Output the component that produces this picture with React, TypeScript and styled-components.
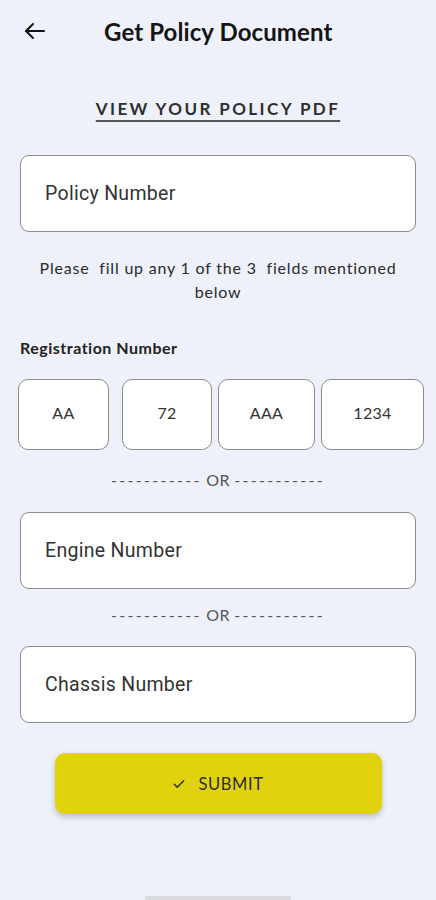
import React from "react";
import styled, { createGlobalStyle } from "styled-components";

const Global = createGlobalStyle`
  html, body { margin: 0; padding: 0; background: #eef1f9; }
  * { box-sizing: border-box; }
`;

const Screen = styled.div`
  min-height: 100vh;
  display: flex;
  flex-direction: column;
  background: #eef1f9;
  font-family: Lato, "Noto Sans", sans-serif;
  color: #1c1c1c;
`;

const Header = styled.header`
  height: 62px;
  display: flex;
  align-items: center;
  padding: 0 0 0 22px;
`;

const BackButton = styled.button`
  width: 26px;
  height: 26px;
  padding: 0;
  border: none;
  background: none;
  display: flex;
  align-items: center;
  justify-content: center;
  color: #111;
`;

const Title = styled.h1`
  margin: 0 0 0 56px;
  font-size: 24px;
  font-weight: 700;
  color: #151515;
  letter-spacing: 0.1px;
`;

const Content = styled.main`
  display: flex;
  flex-direction: column;
  padding: 0 20px;
`;

const LinkTitle = styled.a`
  align-self: center;
  margin-top: 36px;
  font-size: 17px;
  font-weight: 700;
  letter-spacing: 2.4px;
  color: #2e2e2e;
  text-decoration: underline;
  text-decoration-color: #555;
  text-underline-offset: 5px;
  text-decoration-thickness: 2px;
`;

const Field = styled.div<{ $mt: number }>`
  margin-top: ${(p) => p.$mt}px;
  height: 77px;
  background: #fff;
  border: 1px solid #8c8c8c;
  border-radius: 9px;
  display: flex;
  align-items: center;
  padding-left: 24px;
  font-family: Roboto, "Noto Sans", sans-serif;
  font-size: 19.5px;
  color: #333;
  letter-spacing: 0.3px;
`;

const Helper = styled.p`
  margin: 24px auto 0;
  width: 370px;
  text-align: center;
  font-size: 16px;
  letter-spacing: 0.8px;
  line-height: 24px;
  color: #2b2b2b;
  white-space: pre-wrap;
`;

const Label = styled.div`
  margin-top: 34px;
  font-size: 16px;
  letter-spacing: 0.5px;
  font-weight: 700;
  color: #222;
`;

const RegRow = styled.div`
  margin: 22px -8px 0 -2px;
  display: flex;
`;

const RegBox = styled.div<{ $w: number; $mr: number }>`
  flex: none;
  width: ${(p) => p.$w}px;
  margin-right: ${(p) => p.$mr}px;
  height: 71px;
  padding-bottom: 5px;
  background: #fff;
  border: 1px solid #8c8c8c;
  border-radius: 10px;
  display: flex;
  align-items: center;
  justify-content: center;
  font-size: 16px;
  color: #333;
  letter-spacing: 0.3px;
`;

const OrDivider = styled.div<{ $mt: number }>`
  margin-top: ${(p) => p.$mt}px;
  text-align: center;
  font-size: 16px;
  line-height: 20px;
  color: #555;
  letter-spacing: 0.4px;
`;

const Dashes = styled.span`
  letter-spacing: 2.3px;
`;

const SubmitButton = styled.button`
  margin: 30px auto 0;
  width: 327px;
  height: 61px;
  border: none;
  border-radius: 10px;
  background: #e0d30e;
  box-shadow: 0 3px 6px rgba(0, 0, 0, 0.22);
  display: flex;
  align-items: center;
  justify-content: center;
  gap: 12px;
  font-family: Lato, "Noto Sans", sans-serif;
  font-size: 16.5px;
  color: #2c2c2c;
  letter-spacing: 0.6px;
`;

const HomeIndicator = styled.div`
  margin: auto auto 0;
  width: 146px;
  height: 4px;
  border-radius: 2px 2px 0 0;
  background: #d9dbe1;
`;

const regs = [
  { v: "AA", w: 91, mr: 13 },
  { v: "72", w: 90, mr: 6 },
  { v: "AAA", w: 97, mr: 6 },
  { v: "1234", w: 103, mr: 0 },
];

function Or({ mt }: { mt: number }) {
  return (
    <OrDivider $mt={mt}>
      <Dashes>-----------</Dashes> OR <Dashes>-----------</Dashes>
    </OrDivider>
  );
}

export default function App() {
  return (
    <>
      <Global />
      <Screen>
        <Header>
          <BackButton aria-label="Back">
            <svg width="24" height="24" viewBox="0 0 24 24" fill="none" stroke="#111" strokeWidth="2" strokeLinecap="round" strokeLinejoin="round">
              <path d="M21 12H3" />
              <path d="M10 5l-7 7 7 7" />
            </svg>
          </BackButton>
          <Title>Get Policy Document</Title>
        </Header>
        <Content>
          <LinkTitle>VIEW YOUR POLICY PDF</LinkTitle>
          <Field $mt={36}>Policy Number</Field>
          <Helper>{"Please  fill up any 1 of the 3  fields mentioned below"}</Helper>
          <Label>Registration Number</Label>
          <RegRow>
            {regs.map((r) => (
              <RegBox key={r.v} $w={r.w} $mr={r.mr}>
                {r.v}
              </RegBox>
            ))}
          </RegRow>
          <Or mt={20} />
          <Field $mt={22}>Engine Number</Field>
          <Or mt={16} />
          <Field $mt={21}>Chassis Number</Field>
          <SubmitButton>
            <svg width="14" height="14" viewBox="0 0 24 24" fill="none" stroke="#2c2c2c" strokeWidth="2.6" strokeLinecap="round" strokeLinejoin="round">
              <path d="M4 12.5l5 5L20 6.5" />
            </svg>
            SUBMIT
          </SubmitButton>
        </Content>
        <HomeIndicator />
      </Screen>
    </>
  );
}
